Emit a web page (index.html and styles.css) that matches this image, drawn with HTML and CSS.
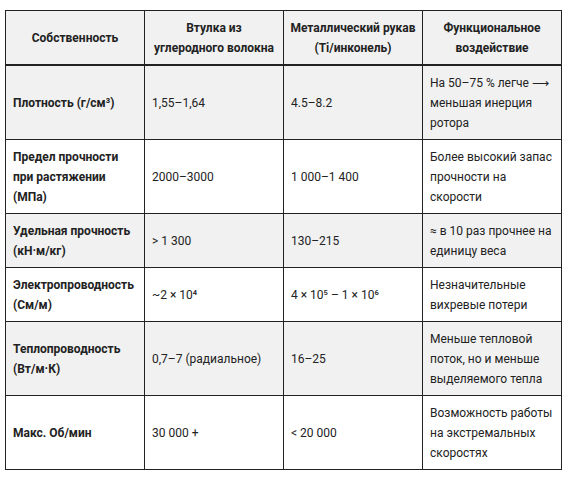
FILE: index.html
```html
<!DOCTYPE html>
<html lang="ru">
<head>
    <meta charset="UTF-8">
    <title>Сравнение втулок</title>
    <link rel="stylesheet" href="styles.css">
</head>
<body>
<table class="cmp">
    <thead>
    <tr>
        <th>Собственность</th>
        <th>Втулка из<br>углеродного волокна</th>
        <th>Металлический рукав<br>(Ti/инконель)</th>
        <th>Функциональное<br>воздействие</th>
    </tr>
    </thead>
    <tbody>
    <tr class="alt">
        <td class="prop">Плотность (г/см³)</td>
        <td>1,55–1,64</td>
        <td>4.5–8.2</td>
        <td>На 50–75 % легче ⟶ меньшая инерция ротора</td>
    </tr>
    <tr>
        <td class="prop">Предел прочности при растяжении (МПа)</td>
        <td>2000–3000</td>
        <td>1 000–1 400</td>
        <td>Более высокий запас прочности на скорости</td>
    </tr>
    <tr class="alt">
        <td class="prop">Удельная прочность (кН·м/кг)</td>
        <td>&gt; 1 300</td>
        <td>130–215</td>
        <td>≈ в 10 раз прочнее на единицу веса</td>
    </tr>
    <tr>
        <td class="prop">Электропроводность (См/м)</td>
        <td>~2 × 10⁴</td>
        <td>4 × 10⁵ – 1 × 10⁶</td>
        <td>Незначительные вихревые потери</td>
    </tr>
    <tr class="alt">
        <td class="prop">Теплопроводность (Вт/м·К)</td>
        <td>0,7–7 (радиальное)</td>
        <td>16–25</td>
        <td>Меньше тепловой поток, но и меньше выделяемого тепла</td>
    </tr>
    <tr>
        <td class="prop">Макс. Об/мин</td>
        <td>30 000 +</td>
        <td>&lt; 20 000</td>
        <td>Возможность работы на экстремальных скоростях</td>
    </tr>
    </tbody>
</table>
</body>
</html>
```

FILE: styles.css
```css
*{
    margin: 0;
    padding: 0;
}
body{
    background: #fff;
    padding: 10px 0 0 5px;
    font-family: Roboto, "Noto Sans", Arial, sans-serif;
    font-size: 12px;
    line-height: 20px;
    color: #222;
}
.cmp{
    width: 557px;
    border-collapse: collapse;
    table-layout: fixed;
    border: 1px solid #222;
}
.cmp th,
.cmp td{
    border: 1px solid #222;
    padding: 6.5px 7px;
    vertical-align: middle;
    text-align: left;
}
.cmp th{
    background: #f1f1f1;
    font-weight: 700;
    text-align: center;
    padding: 6.5px 2px;
    white-space: nowrap;
    border-bottom: 2px solid #222;
}
.cmp .alt td{
    background: #f1f1f1;
}
.cmp .prop{
    font-weight: 700;
}
```
